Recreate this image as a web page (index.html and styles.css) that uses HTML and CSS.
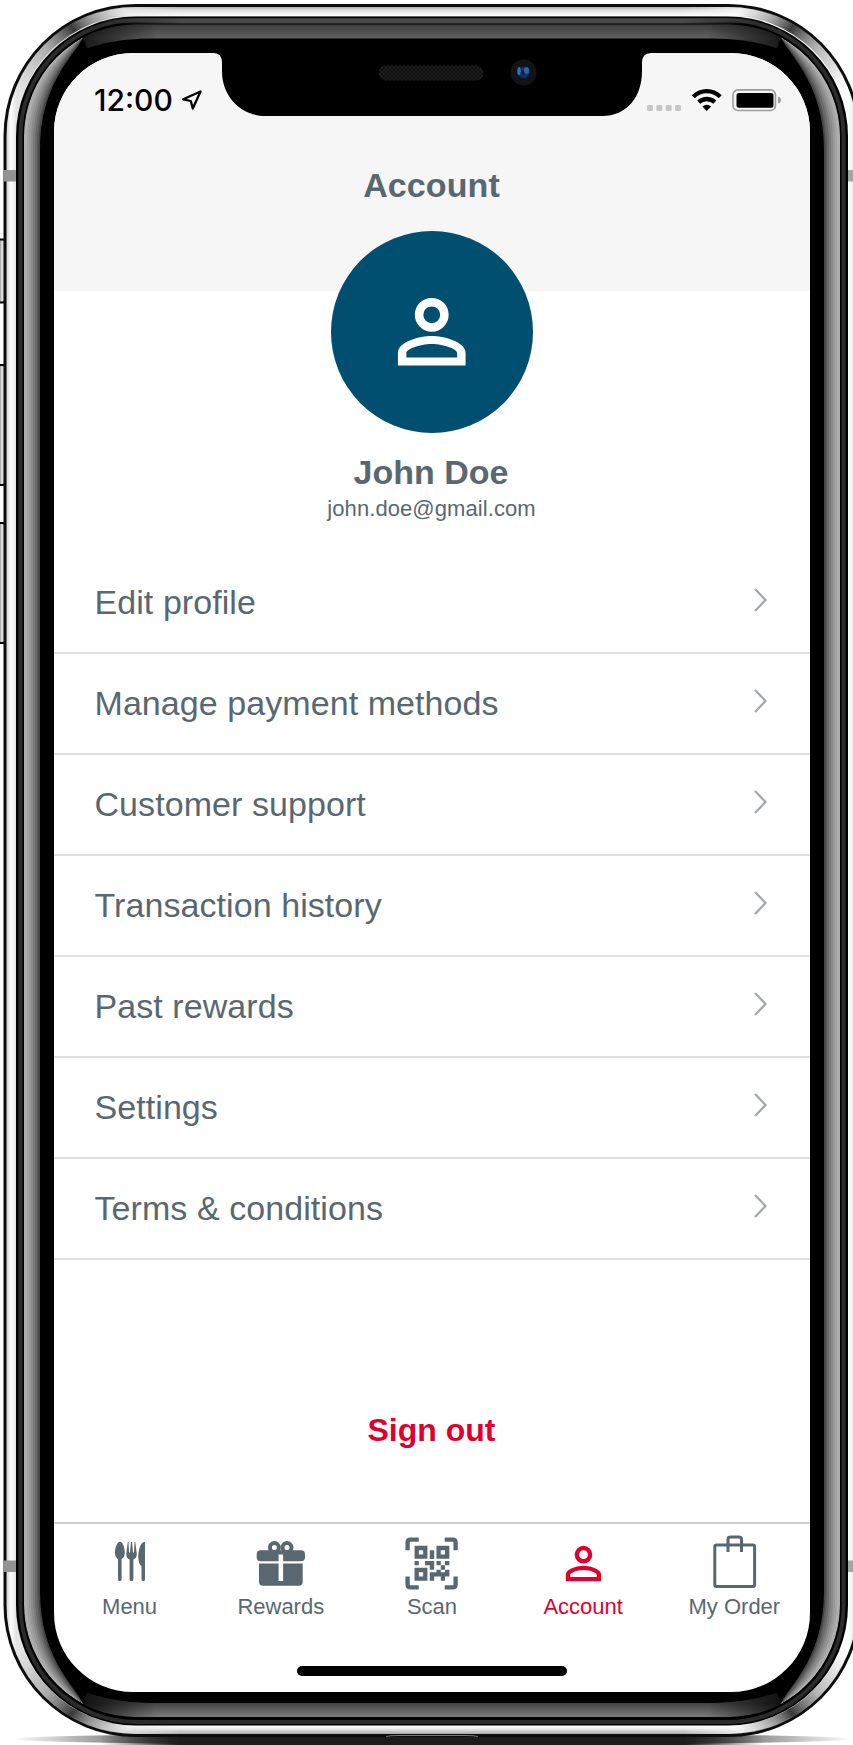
FILE: index.html
```html
<!DOCTYPE html>
<html lang="en">
<head>
<meta charset="utf-8">
<title>Account</title>
<link rel="stylesheet" href="styles.css">
</head>
<body>
<svg class="device" viewBox="0 0 853 1745" aria-hidden="true">
  <defs>
    <linearGradient id="rimX" gradientUnits="userSpaceOnUse" x1="4" y1="0" x2="860" y2="0">
      <stop offset="0" stop-color="#888"/><stop offset=".004" stop-color="#ddd"/><stop offset=".008" stop-color="#fff"/><stop offset=".014" stop-color="#e4e4e4"/>
      <stop offset=".986" stop-color="#fff"/><stop offset=".992" stop-color="#eee"/><stop offset="1" stop-color="#777"/>
    </linearGradient>
    <linearGradient id="rimTop" x1="0" y1="0" x2="0" y2="1"><stop offset="0" stop-color="#aaa"/><stop offset=".3" stop-color="#ddd"/><stop offset=".9" stop-color="#fff"/><stop offset="1" stop-color="#888"/></linearGradient>
    <linearGradient id="rimBottom" x1="0" y1="0" x2="0" y2="1"><stop offset="0" stop-color="#fff"/><stop offset=".4" stop-color="#f4f4f4"/><stop offset="1" stop-color="#aaa"/></linearGradient>
    <linearGradient id="bandY" gradientUnits="userSpaceOnUse" x1="0" y1="24" x2="0" y2="1717">
      <stop offset="0" stop-color="#3c3c3c"/><stop offset=".008" stop-color="#606060"/><stop offset=".05" stop-color="#444"/>
      <stop offset=".95" stop-color="#333"/><stop offset=".992" stop-color="#444"/><stop offset="1" stop-color="#7c7c7c"/>
    </linearGradient>
    <linearGradient id="fadeL" x1="0" y1="0" x2="1" y2="0"><stop offset="0" stop-color="#000" stop-opacity=".75"/><stop offset="1" stop-color="#000" stop-opacity="0"/></linearGradient>
    <linearGradient id="shadow" x1="0" y1="0" x2="1" y2="0"><stop offset="0" stop-color="#333" stop-opacity="0"/><stop offset=".16" stop-color="#333" stop-opacity=".75"/><stop offset=".3" stop-color="#1c1c1c"/><stop offset=".7" stop-color="#1c1c1c"/><stop offset=".84" stop-color="#333" stop-opacity=".75"/><stop offset="1" stop-color="#333" stop-opacity="0"/></linearGradient>
    <linearGradient id="key" gradientUnits="userSpaceOnUse" x1="0" y1="0" x2="6" y2="0"><stop offset="0" stop-color="#999"/><stop offset=".3" stop-color="#e2e2e4"/><stop offset=".7" stop-color="#d0d0d2"/><stop offset="1" stop-color="#888"/></linearGradient>
    <linearGradient id="sheen" gradientUnits="userSpaceOnUse" x1="20" y1="90" x2="125" y2="10"><stop offset="0" stop-color="#999" stop-opacity="0"/><stop offset=".35" stop-color="#888" stop-opacity=".6"/><stop offset=".6" stop-color="#3a3a3a"/><stop offset=".75" stop-color="#777" stop-opacity=".7"/><stop offset="1" stop-color="#999" stop-opacity="0"/></linearGradient>
    <linearGradient id="fadeEnds" gradientUnits="userSpaceOnUse" x1="100" y1="0" x2="764" y2="0"><stop offset="0" stop-color="#000"/><stop offset=".12" stop-color="#fff"/><stop offset=".88" stop-color="#fff"/><stop offset="1" stop-color="#000"/></linearGradient>
    <mask id="ends" maskUnits="userSpaceOnUse" x="0" y="0" width="864" height="1745"><rect width="864" height="1745" fill="url(#fadeEnds)"/></mask>
    <clipPath id="rimClip"><rect x="6.500" y="7" width="851" height="1727" rx="129"/></clipPath>
    <clipPath id="bandClip"><rect x="24" y="24.500" width="816" height="1692.500" rx="112"/></clipPath>
    <g id="edge">
      <path fill="#aeaeae" d="M83 37C47 57 24 95 24 136V1605C24 1646 47 1684 83 1704Z"/>
      <path fill="#a3a3a3" d="M83 37C52 57 27 93 27 139V1602C27 1648 52 1684 83 1704Z"/>
      <path fill="#989898" d="M83 37C54 57 29 92 29 140V1601C29 1649 54 1684 83 1704Z"/>
      <path fill="#8a8a8a" d="M83 37C57 57 31 91 31 142V1599C31 1650 57 1684 83 1704Z"/>
      <path fill="#7a7a7a" d="M83 37C61 57 33 89 33 144V1597C33 1652 61 1684 83 1704Z"/>
      <path fill="#696969" d="M83 37C64 57 35 88 35 146V1595C35 1653 64 1684 83 1704Z"/>
      <path fill="#585858" d="M83 37C67 57 37 86 37 148V1593C37 1655 67 1684 83 1704Z"/>
      <path fill="#444" d="M83 37C70 58 38.500 85 38.500 149V1592C38.500 1656 70 1683 83 1704Z"/>
      <path fill="#000" d="M83 38C72 58 40 85 40 150V1591C40 1656 72 1683 83 1703L100 1660V80Z"/>
    </g>
    <path id="corner" d="M10.500 136A125.500 125.500 0 0 1 136 11" fill="none" stroke="url(#sheen)" stroke-width="9"/>
    <g id="fades"><rect x="83" y="25" width="75" height="30" fill="url(#fadeL)"/><rect x="83" y="1690" width="75" height="27" fill="url(#fadeL)"/></g>
  </defs>
  <ellipse cx="432" cy="1739" rx="420" ry="6" fill="url(#shadow)"/>
  <rect x="100" y="1736" width="664" height="9" fill="#1c1c1c" mask="url(#ends)"/>
  <g fill="url(#key)" stroke="#000" stroke-width="2">
    <rect x="-8" y="239.500" width="13.500" height="63" rx="3"/>
    <rect x="-8" y="365" width="13.500" height="120" rx="3"/>
    <rect x="-8" y="523" width="13.500" height="120" rx="3"/>
  </g>
  <rect x="3.500" y="4" width="857" height="1733" rx="132" fill="#0c0c0c"/>
  <rect x="6.500" y="7" width="851" height="1727" rx="129" fill="url(#rimX)"/>
  <g clip-path="url(#rimClip)"><g mask="url(#ends)">
    <rect x="100" y="7" width="664" height="10" fill="url(#rimTop)"/>
    <rect x="100" y="1724" width="664" height="10" fill="url(#rimBottom)"/>
  </g></g>
  <use href="#corner"/><use href="#corner" transform="translate(864) scale(-1 1)"/>
  <use href="#corner" transform="translate(0 1741) scale(1 -1)"/><use href="#corner" transform="translate(864 1741) scale(-1 -1)"/>
  <rect x="3.500" y="170" width="14" height="11.500" fill="#929292"/><rect x="846" y="170" width="14" height="11.500" fill="#a4a4a4"/>
  <rect x="3.500" y="1560.500" width="14" height="11.500" fill="#929292"/><rect x="846" y="1560.500" width="14" height="11.500" fill="#a4a4a4"/>
  <rect x="16" y="16.500" width="832" height="1709" rx="120" fill="#000"/>
  <rect x="20.500" y="20" width="823" height="1702" rx="116" fill="none" stroke="#2b2b2b" stroke-width="4"/>
  <rect x="100" y="18.500" width="664" height="5" fill="#484848" mask="url(#ends)"/>
  <rect x="24" y="24.500" width="816" height="1692.500" rx="112" fill="url(#bandY)"/>
  <g clip-path="url(#bandClip)">
    <use href="#fades"/><use href="#fades" transform="translate(864) scale(-1 1)"/>
    <path fill="#000" d="M83 50Q110 39 150 38.500H714Q754 39 781 50V1691Q754 1702 714 1703H150Q110 1702 83 1691Z"/>
    <use href="#edge"/><use href="#edge" transform="translate(864) scale(-1 1)"/>
  </g>
  <path d="M386 1736.500Q390 1735.500 398 1735.500H466Q474 1735.500 478 1736.500" fill="none" stroke="#777"/>
</svg>

<main class="screen">
  <svg class="notch" viewBox="0 0 440 65" aria-hidden="true">
    <defs>
      <pattern id="mesh" width="4" height="4" patternUnits="userSpaceOnUse"><rect width="4" height="4" fill="#0d0d0d"/><rect width="2" height="2" fill="#1f1f1f"/><rect x="2" y="2" width="2" height="2" fill="#1f1f1f"/></pattern>
      <radialGradient id="lens"><stop offset="0" stop-color="#071226"/><stop offset=".5" stop-color="#123a70"/><stop offset="1" stop-color="#060c1a"/></radialGradient>
    </defs>
    <path d="M0 -2V0H3Q11 0 11 10V18C11 44 30 63 55 63H391C416 63 431 44 431 18V10Q431 0 440 0V-2Z"/>
    <rect x="167.500" y="12.500" width="105" height="15" rx="7.500" fill="url(#mesh)"/>
    <circle cx="312.500" cy="19.500" r="13" fill="#131313"/><circle cx="312.500" cy="19.500" r="7.500" fill="url(#lens)"/>
    <ellipse cx="308" cy="18" rx="1.700" ry="4" fill="#2f73b5"/><ellipse cx="315.500" cy="17.500" rx="2.600" ry="3.600" fill="#2a62a2"/>
  </svg>

  <header class="header">
    <div class="status">
      <span class="time">12:00</span>
      <svg class="location" viewBox="0 0 20 20"><path d="M18.500 1.500 1.200 9.300 8.800 11 10.800 18.500Z" fill="none" stroke="#000" stroke-width="2.300" stroke-linejoin="round"/></svg>
      <svg class="signals" viewBox="0 0 135 22">
        <g fill="#c6c6c6"><rect y="16" width="6" height="6" rx="1.500"/><rect x="9.300" y="16" width="6" height="6" rx="1.500"/><rect x="18.700" y="16" width="6" height="6" rx="1.500"/><rect x="28" y="16" width="6" height="6" rx="1.500"/></g>
        <g fill="none" stroke="#000" stroke-width="4.300"><path d="M46.300 7.700C54 .3 65.500 .3 73.200 7.700"/><path d="M51.700 13.200C56.500 8.900 63 8.900 67.800 13.200"/></g>
        <path d="M55.300 17.600Q59.700 14 64.200 17.600L59.700 22Z"/>
        <rect x="86" y=".9" width="42.500" height="20.600" rx="5" fill="none" stroke="#9b9b9b" stroke-width="1.600"/><rect x="89.500" y="4" width="37" height="14.800" rx="2.500"/><path d="M131 7.500Q134 8.500 134 11T131 14.500Z" fill="#9b9b9b"/>
      </svg>
    </div>
    <h1 class="title">Account</h1>
  </header>

  <section class="profile">
    <div class="avatar"><svg viewBox="0 0 24 24"><use href="#person"/></svg></div>
    <h2 class="name">John Doe</h2>
    <p class="email">john.doe@gmail.com</p>
  </section>

  <svg class="symbols" aria-hidden="true">
    <symbol id="person" viewBox="0 0 24 24"><circle cx="12" cy="8" r="3" fill="none" stroke="currentColor" stroke-width="2"/><path fill="currentColor" fill-rule="evenodd" d="M12 13C9.300 13 4 14.300 4 17V20H20V17C20 14.300 14.700 13 12 13ZM12 14.900C15 14.900 18 16.200 18 17V18.100H6V17C6 16.200 9 14.900 12 14.900Z"/></symbol>
    <symbol id="chevron" viewBox="0 0 14 24"><path d="M1 1 11.500 12 1 23" fill="none" stroke="#a3a8ab" stroke-width="2.300"/></symbol>
  </svg>

  <ul class="list">
    <li class="row"><span>Edit profile</span><svg class="chevron"><use href="#chevron"/></svg></li>
    <li class="row"><span>Manage payment methods</span><svg class="chevron"><use href="#chevron"/></svg></li>
    <li class="row"><span>Customer support</span><svg class="chevron"><use href="#chevron"/></svg></li>
    <li class="row"><span>Transaction history</span><svg class="chevron"><use href="#chevron"/></svg></li>
    <li class="row"><span>Past rewards</span><svg class="chevron"><use href="#chevron"/></svg></li>
    <li class="row"><span>Settings</span><svg class="chevron"><use href="#chevron"/></svg></li>
    <li class="row"><span>Terms &amp; conditions</span><svg class="chevron"><use href="#chevron"/></svg></li>
  </ul>

  <div class="signout">Sign out</div>

  <nav class="tabs">
    <div class="tab"><svg class="icon" viewBox="0 0 53 53" fill="currentColor">
      <path d="M17 4.700C14 4.700 12 11 12 15.500Q12 20.500 15 22V42.500Q15 44 16.800 44T18.600 42.500V22Q21.800 20.500 21.800 15.500C21.800 11 20 4.700 17 4.700Z"/>
      <path d="M24.800 5H25.500L26 15.500H27L27.900 5H29.100L30 15.500H31L31.600 5H32.300L33.800 17Q33.600 21.500 30.400 22.500V42.500Q30.400 44 28.500 44T26.600 42.500V22.500Q23.400 21.500 23.200 17Z"/>
      <path d="M42 4.700C37 5 35.300 14 35.300 20Q35.300 27 38.500 29V42.500Q38.500 44 40.200 44T42 42.500Z"/></svg><span>Menu</span></div>
    <div class="tab"><svg class="icon" viewBox="0 0 53 53" fill="currentColor">
      <g fill="none" stroke="currentColor" stroke-width="4"><circle cx="20.400" cy="10.500" r="4.500"/><circle cx="33" cy="10.500" r="4.500"/></g>
      <path d="M6.700 13.300H47Q51 13.300 51 17.300V20.300Q51 24.300 47 24.300H6.700Q2.700 24.300 2.700 20.300V17.300Q2.700 13.300 6.700 13.300Z"/><path d="M5 26.500H48.700V44.700Q48.700 48.700 44.700 48.700H9Q5 48.700 5 44.700Z"/><rect x="24.600" y="17.500" width="4.500" height="26.500" fill="#fff"/></svg><span>Rewards</span></div>
    <div class="tab"><svg class="icon" viewBox="0 0 53 53" fill="currentColor">
      <g fill="none" stroke="currentColor" stroke-width="4.300"><path d="M2.600 13.300V5.400Q2.600 2.600 5.400 2.600H13.800M39.700 2.600H47.800Q50.600 2.600 50.600 5.400V13.300M2.600 39.500V47.600Q2.600 50.400 5.400 50.400H13.800M39.700 50.400H47.800Q50.600 50.400 50.600 47.600V39.500"/>
      <path d="M11.700 11H20.300V19.600H11.700ZM33.600 11H42.200V19.600H33.600ZM11.700 33H20.300V41.600H11.700Z"/></g>
      <path d="M24.800 13.300H29.200V22H24.800ZM9.500 24H13.800V28.300H9.500ZM20 24H29.200V32.700H24.800V28.300H20ZM31.500 24H35.800V28.300H31.500ZM40 24H44.400V28.300H40ZM35.800 28.300H40V32.700H35.800ZM31.500 32.700H35.800V35.200H40V39.500H29.200V43.800H24.800V35.200H31.500ZM40 32.700H44.400V39.500H40ZM35.800 39.500H40V43.800H35.800Z"/></svg><span>Scan</span></div>
    <div class="tab active"><svg class="icon" viewBox="0 0 24 24"><use href="#person"/></svg><span>Account</span></div>
    <div class="tab"><svg class="icon" viewBox="0 0 53 53" fill="none" stroke="currentColor" stroke-width="3"><rect x="6.800" y="8" width="39.800" height="41.500" rx="1.800"/><path d="M20 15V2.500Q20 0 22.500 0H31Q33.500 0 33.500 2.500V15"/></svg><span>My Order</span></div>
  </nav>
  <div class="home"></div>
</main>
</body>
</html>
```
FILE: styles.css
```css
* { box-sizing: border-box; margin: 0; padding: 0; }
body { width: 853px; height: 1745px; padding: 53px 0 0 54px; overflow: hidden; position: relative; background: #fff; color: #596870; font-family: "Liberation Sans", Arial, sans-serif; }
svg { display: block; overflow: visible; }
.device { position: absolute; top: 0; left: 0; width: 853px; height: 1745px; overflow: hidden; }
.screen { position: relative; display: flex; flex-direction: column; width: 756px; height: 1639px; border-radius: 79px; overflow: hidden; background: #fff; }
.notch { position: absolute; top: 0; left: 157px; width: 440px; height: 65px; }
.header { flex: none; height: 238px; background: #f6f6f6; }
.status { display: flex; align-items: center; height: 93px; padding: 0 28px 0 40px; }
.time { width: 80px; color: #000; font: 500 30px/36px Inter, "Liberation Sans", sans-serif; white-space: nowrap; }
.location { width: 20px; height: 20px; margin-left: 8px; }
.signals { width: 135px; height: 22px; margin-left: auto; }
.title { margin-top: 19px; padding-right: 1px; font-size: 34px; line-height: 40px; letter-spacing: .1px; text-align: center; }
.profile { flex: none; display: flex; flex-direction: column; align-items: center; height: 262px; margin-top: -60px; }
.avatar { display: grid; place-items: center; flex: none; width: 202px; height: 202px; border-radius: 50%; background: #004e70; color: #fff; }
.avatar svg { width: 101.500px; height: 101.500px; }
.name { margin-top: 19px; padding-right: 2px; font-size: 34px; line-height: 40px; }
.email { margin-top: 3px; padding-right: 1px; font-size: 22px; line-height: 28px; letter-spacing: .08px; }
.symbols { position: absolute; width: 0; height: 0; }
.list { flex: none; margin-top: 60px; list-style: none; }
.row { display: flex; align-items: center; justify-content: space-between; height: 101px; padding: 0 42px 0 40.500px; border-bottom: 2px solid #dce0e2; font-size: 34px; line-height: 40px; letter-spacing: .07px; }
.row span { padding-bottom: 2px; }
.chevron { width: 14px; height: 24px; margin-top: -6px; }
.signout { flex: none; margin-top: 150px; padding-right: 1px; color: #e0002f; font-size: 32px; font-weight: 700; line-height: 40px; text-align: center; }
.tabs { flex: none; display: grid; grid-template-columns: repeat(5, 151.200px); height: 100px; margin-top: auto; border-top: 2px solid #cdcfd0; }
.tab { display: flex; flex-direction: column; align-items: center; padding-top: 13px; font-size: 22px; line-height: 28px; white-space: nowrap; }
.active { color: #e0002f; }
.icon { width: 53px; height: 53px; margin-bottom: 3px; }
.home { flex: none; align-self: center; width: 270px; height: 10px; margin: 44px 0 16px; border-radius: 5px; background: #000; }
```
